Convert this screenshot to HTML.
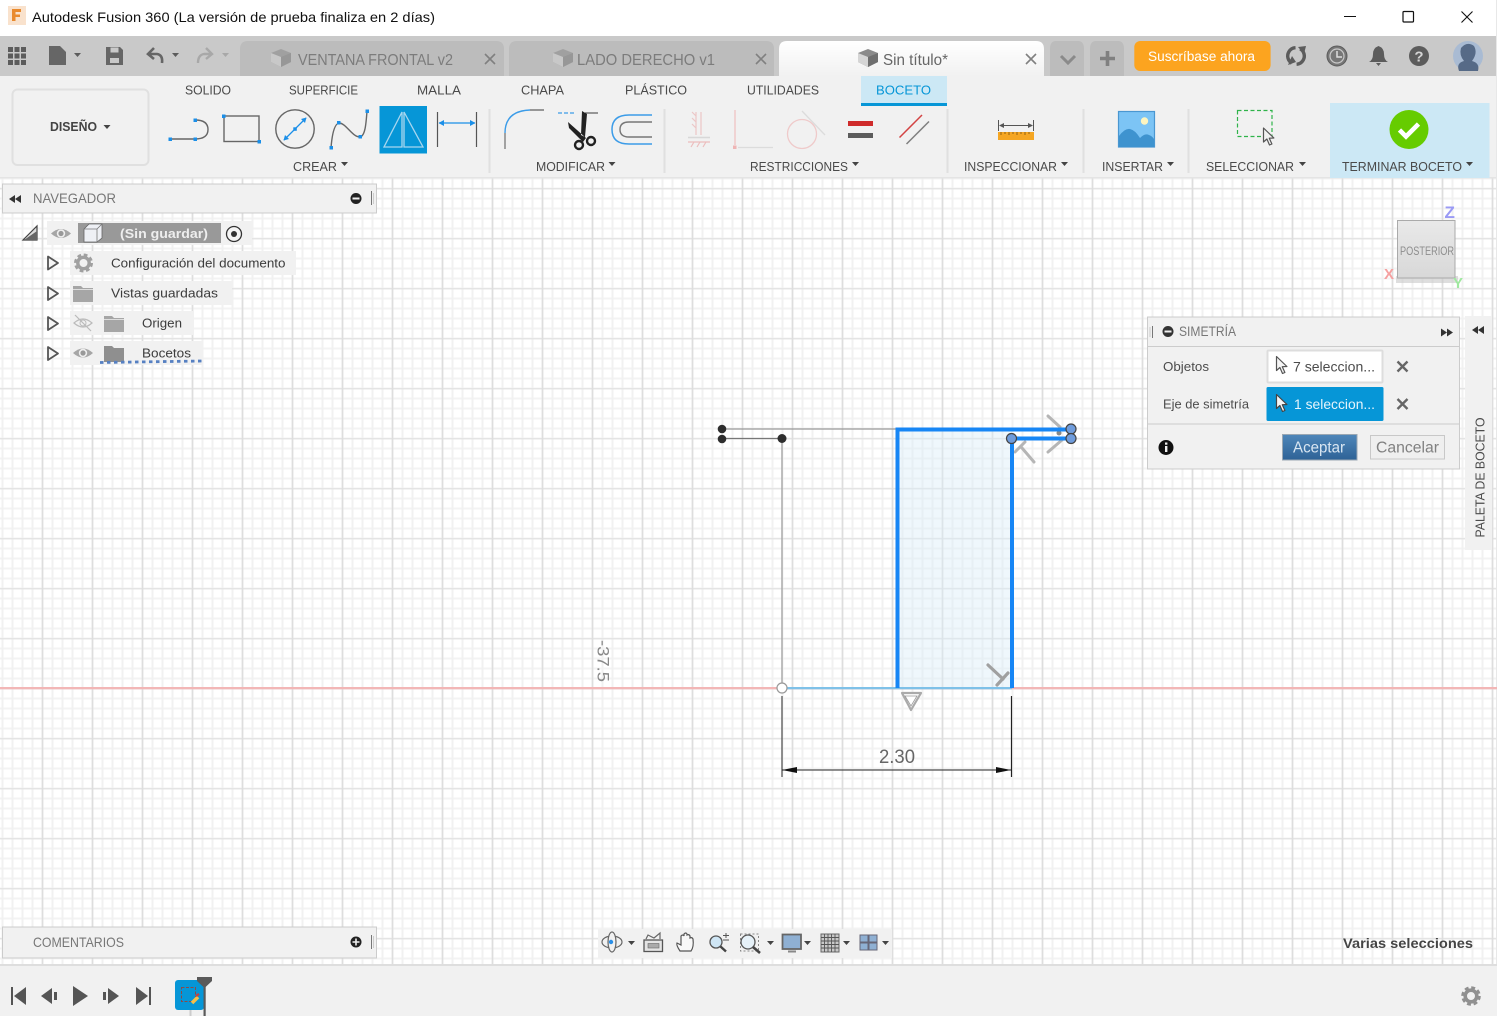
<!DOCTYPE html>
<html><head><meta charset="utf-8"><title>Autodesk Fusion 360</title>
<style>
html,body{margin:0;padding:0;width:1497px;height:1016px;overflow:hidden;background:#fff}
svg{position:absolute;left:0;top:0;display:block;filter:blur(0.35px)}
text{font-family:"Liberation Sans",sans-serif}
.rb{font-size:13px;fill:#4a4a4a}
.lb{font-size:13px;fill:#4a4a4a}
.tr{font-size:12.5px;fill:#3c3c3c}
.gr{stroke:#666;fill:none;stroke-width:1.4}
.bl{fill:#0696d7}
</style></head><body>
<svg width="1497" height="1016" viewBox="0 0 1497 1016" xmlns="http://www.w3.org/2000/svg">
<defs>
<pattern id="gmv" width="10" height="10" patternUnits="userSpaceOnUse" patternTransform="translate(1.5 0)"><rect width="2" height="10" fill="#f1f1f1"/></pattern>
<pattern id="gmh" width="10" height="10" patternUnits="userSpaceOnUse" patternTransform="translate(0 7.5)"><rect width="10" height="2" fill="#f3f3f3"/></pattern>
<pattern id="gMv" width="50" height="50" patternUnits="userSpaceOnUse" patternTransform="translate(41.7 0)"><rect width="1.6" height="50" fill="#dedede"/></pattern>
<pattern id="gMh" width="50" height="50" patternUnits="userSpaceOnUse" patternTransform="translate(0 38)"><rect width="50" height="1.4" fill="#e4e4e4"/></pattern>
<linearGradient id="acc" x1="0" y1="0" x2="0" y2="1"><stop offset="0" stop-color="#4f87ba"/><stop offset="1" stop-color="#2e6296"/></linearGradient>
<linearGradient id="tabw" x1="0" y1="0" x2="0" y2="1"><stop offset="0" stop-color="#fff"/><stop offset="1" stop-color="#f1f1f1"/></linearGradient>
<linearGradient id="vc" x1="0" y1="0" x2="0" y2="1"><stop offset="0" stop-color="#e9e9e9"/><stop offset="1" stop-color="#d8d8d8"/></linearGradient>
<g id="cube"><path d="M0 4 L10 0 L20 4 L20 13 L10 18 L0 13Z" fill="#8a8a8a"/><path d="M0 4 L10 8 L10 18 L0 13Z" fill="#d5d5d5"/><path d="M10 8 L20 4 L20 13 L10 18Z" fill="#6f6f6f"/></g>
<g id="cubel"><path d="M0 4 L10 0 L20 4 L20 13 L10 18 L0 13Z" fill="#a0a0a0"/><path d="M0 4 L10 8 L10 18 L0 13Z" fill="#c8c8c8"/><path d="M10 8 L20 4 L20 13 L10 18Z" fill="#979797"/></g>
<g id="car"><path d="M0 0 H7 L3.5 4Z"/></g>
<g id="folder"><path d="M0 1 H8 L10 3 H20 V17 H0Z" fill="#a6a6a6"/><path d="M0 4.500 H20" stroke="#f1f1f1" stroke-width="0.800"/></g>
<g id="eye"><path d="M-10 0 Q0 -9 10 0 Q0 9 -10 0Z" fill="#a6a6a6"/><circle r="4.200" fill="#eee"/><circle r="2.600" fill="#999"/></g>
<g id="tri"><path d="M-5 -6.5 L5 0 L-5 6.5Z" fill="#f5f5f5" stroke="#555" stroke-width="1.800" stroke-linejoin="round"/></g>
<g id="cur"><path d="M0 0 L0 14 L3.4 11 L6 17 L8.4 16 L5.8 10.2 L10.4 10 Z" stroke-width="1.2" stroke-linejoin="round"/></g>
</defs>

<!-- canvas -->
<rect x="0" y="178" width="1497" height="786" fill="#fff"/>
<rect x="0" y="178" width="1497" height="786" fill="url(#gmh)"/>
<rect x="0" y="178" width="1497" height="786" fill="url(#gmv)"/>
<rect x="0" y="178" width="1497" height="786" fill="url(#gMh)"/>
<rect x="0" y="178" width="1497" height="786" fill="url(#gMv)"/>

<!-- title bar -->
<rect x="0" y="0" width="1497" height="36" fill="#fff"/>
<rect x="8" y="6" width="18" height="19" fill="#f9e2cd"/>
<path d="M12 9 H21 V12 H15.5 V14.5 H20 V17 H15.5 V21 H12Z" fill="#e98a2d"/>
<text x="32" y="22" font-size="14" fill="#111" textLength="403" lengthAdjust="spacingAndGlyphs">Autodesk Fusion 360 (La versión de prueba finaliza en 2 días)</text>
<path d="M1344 16.5 H1356" stroke="#111" stroke-width="1"/>
<rect x="1403" y="11.5" width="10.5" height="10.5" rx="1" fill="none" stroke="#111" stroke-width="1.2"/>
<path d="M1461.5 11.5 L1472.5 22.5 M1472.5 11.5 L1461.5 22.5" stroke="#111" stroke-width="1.1"/>

<!-- tab bar -->
<rect x="0" y="36" width="1496" height="40" fill="#c9c9c9"/>
<g fill="#5c5c5c">
<rect x="8" y="47" width="5" height="5"/><rect x="14.5" y="47" width="5" height="5"/><rect x="21" y="47" width="5" height="5"/>
<rect x="8" y="53.5" width="5" height="5"/><rect x="14.5" y="53.5" width="5" height="5"/><rect x="21" y="53.5" width="5" height="5"/>
<rect x="8" y="60" width="5" height="5"/><rect x="14.5" y="60" width="5" height="5"/><rect x="21" y="60" width="5" height="5"/>
<path d="M49 46 H60 L66 52 V65 H49Z" fill="#666"/>
<use href="#car" x="74" y="53"/>
<path d="M106 47 H120 L123 50 V65 H106Z" fill="#666"/>
<use href="#car" x="172" y="53"/>
</g>
<rect x="110.500" y="47.500" width="8" height="5" fill="#c9c9c9"/><rect x="110" y="58" width="9" height="5" fill="#c9c9c9"/>
<path d="M154 48 L148 54 L154 59 M148 54 H157 Q163 55 162 63" fill="none" stroke="#666" stroke-width="2.600"/>
<path d="M206 48 L212 54 L206 59 M212 54 H204 Q198 55 198 63" fill="none" stroke="#a8a8a8" stroke-width="2.400"/>
<use href="#car" x="222" y="53" fill="#a8a8a8"/>

<path d="M240 76 V49 Q240 41 248 41 H496 Q504 41 504 49 V76Z" fill="#bcbcbc"/>
<path d="M509 76 V49 Q509 41 517 41 H766 Q774 41 774 49 V76Z" fill="#bcbcbc"/>
<path d="M779 76 V49 Q779 41 787 41 H1036 Q1044 41 1044 49 V76Z" fill="url(#tabw)"/>
<path d="M1050 76 V49 Q1050 41 1056 41 H1078 Q1084 41 1084 49 V76Z" fill="#bcbcbc"/>
<path d="M1090 76 V49 Q1090 41 1096 41 H1118 Q1124 41 1124 49 V76Z" fill="#bcbcbc"/>
<use href="#cubel" x="271" y="49"/><use href="#cubel" x="553" y="49"/><use href="#cube" x="858" y="49"/>
<text x="298" y="65" font-size="16" fill="#7c7c7c" textLength="155" lengthAdjust="spacingAndGlyphs">VENTANA FRONTAL v2</text>
<text x="577" y="65" font-size="16" fill="#7c7c7c" textLength="138" lengthAdjust="spacingAndGlyphs">LADO DERECHO v1</text>
<text x="883" y="65" font-size="16" fill="#666" textLength="65" lengthAdjust="spacingAndGlyphs">Sin título*</text>
<path d="M485 54 L495 64 M495 54 L485 64 M756 54 L766 64 M766 54 L756 64" stroke="#808080" stroke-width="1.600"/>
<path d="M1026 54 L1036 64 M1036 54 L1026 64" stroke="#808080" stroke-width="1.600"/>
<path d="M1061 56 L1068 63 L1075 56" fill="none" stroke="#8a8a8a" stroke-width="3"/>
<path d="M1107.500 51 V66 M1100 58.500 H1115" stroke="#808080" stroke-width="3.600"/>
<rect x="1134.300" y="41" width="136.300" height="30" rx="6" fill="#fca41f"/>
<text x="1148" y="61" font-size="13.500" fill="#fff" textLength="107" lengthAdjust="spacingAndGlyphs">Suscríbase ahora</text>
<circle cx="1296" cy="56" r="8.300" fill="none" stroke="#5c5c5c" stroke-width="3.400" stroke-dasharray="21 5 21 5"  transform="rotate(-60 1296 56)"/>
<path d="M1298 47 L1306 46 L1304 54 Z M1292 56 L1288 65 L1296 62Z" fill="#5c5c5c"/>
<circle cx="1337" cy="56" r="10" fill="#777" stroke="#5c5c5c" stroke-width="1"/><circle cx="1337" cy="56" r="7" fill="#777" stroke="#c9c9c9" stroke-width="1.200"/>
<path d="M1337 51 V57 H1342" fill="none" stroke="#ddd" stroke-width="1.500"/>
<path d="M1378.500 46 Q1373 48 1373 54 Q1373 60 1369 62 H1388 Q1384 60 1384 54 Q1384 48 1378.500 46Z M1376 63 H1381 L1378.500 66Z" fill="#5c5c5c"/>
<circle cx="1419" cy="56" r="10" fill="#5c5c5c"/>
<text x="1419" y="61.500" font-size="15" font-weight="bold" fill="#d5d5d5" text-anchor="middle">?</text>
<circle cx="1468" cy="56" r="15" fill="#a9bbd3"/>
<path d="M1459 71 Q1456 63 1464 61 Q1459 55 1461 48 Q1467 41 1474 46 Q1478 53 1472 61 Q1480 63 1478 71 Z" fill="#566a87"/>
<rect x="1496" y="0" width="1" height="1016" fill="#e8e8e8"/>

<!-- ribbon -->
<rect x="0" y="76" width="1496" height="102" fill="#f1f1f1"/>
<rect x="0" y="177" width="1496" height="1.500" fill="#e4e4e4"/>
<rect x="861" y="76" width="86" height="27" fill="#cce8f5"/>
<rect x="861" y="103" width="86" height="3" fill="#0696d7"/>
<g class="rb">
<text x="185" y="94.500" class="rb" textLength="46" lengthAdjust="spacingAndGlyphs">SOLIDO</text>
<text x="289" y="94.500" class="rb" textLength="69" lengthAdjust="spacingAndGlyphs">SUPERFICIE</text>
<text x="417" y="94.500" class="rb" textLength="44" lengthAdjust="spacingAndGlyphs">MALLA</text>
<text x="521" y="94.500" class="rb" textLength="43" lengthAdjust="spacingAndGlyphs">CHAPA</text>
<text x="625" y="94.500" class="rb" textLength="62" lengthAdjust="spacingAndGlyphs">PLÁSTICO</text>
<text x="747" y="94.500" class="rb" textLength="72" lengthAdjust="spacingAndGlyphs">UTILIDADES</text>
<text x="876" y="94.500" font-size="13" fill="#0696d7" textLength="55" lengthAdjust="spacingAndGlyphs">BOCETO</text>
</g>
<rect x="12.500" y="89.500" width="136" height="75.500" rx="5" fill="#f1f1f1" stroke="#e0e0e0" stroke-width="2"/>
<text x="50" y="131" font-size="13" font-weight="bold" fill="#444" textLength="47" lengthAdjust="spacingAndGlyphs">DISEÑO</text>
<use href="#car" x="103.500" y="125" fill="#444"/>

<!-- separators -->
<g fill="#e0e0e0"><rect x="488.500" y="109" width="2" height="64"/><rect x="663.500" y="109" width="2" height="64"/><rect x="946.500" y="109" width="2" height="64"/><rect x="1082.500" y="109" width="2" height="64"/><rect x="1187.500" y="109" width="2" height="64"/></g>

<!-- create icons -->
<path d="M170 139 H195 M195 120 Q208 120 208 129.500 Q208 139 195 139" class="gr"/>
<g fill="#1b8fe8"><rect x="168.500" y="137.500" width="3.500" height="3.500"/><rect x="193.500" y="137.500" width="3.500" height="3.500"/><rect x="193.500" y="118.500" width="3.500" height="3.500"/></g>
<rect x="224" y="116" width="35" height="25.500" class="gr"/>
<g fill="#1b8fe8"><rect x="222" y="114.500" width="3.500" height="3.500"/><rect x="257.500" y="140" width="3.500" height="3.500"/></g>
<circle cx="295" cy="129" r="19.200" class="gr"/>
<path d="M284 140 L306 118" stroke="#1b8fe8" stroke-width="1.300"/>
<path d="M306.500 117.500 L305 123 L301 119Z M283.500 140.500 L285 135 L289 139Z" fill="#1b8fe8"/>
<rect x="293.300" y="127.300" width="3.500" height="3.500" fill="#1b8fe8"/>
<path d="M331 148 C332 135 334 124 339 123 C346 123 352 137 360 137 C365 136 366 125 367 111" class="gr" stroke-width="1.200"/>
<g fill="#1b8fe8"><rect x="329.500" y="146" width="3.500" height="3.500"/><rect x="337" y="121" width="3.500" height="3.500"/><rect x="358.500" y="135" width="3.500" height="3.500"/><rect x="365.500" y="109.500" width="3.500" height="3.500"/></g>
<rect x="379.500" y="106" width="47.500" height="47.500" class="bl"/>
<path d="M402 112 L384 147 H402Z M404 112 L423 147 H404Z" fill="none" stroke="#a8d6ef" stroke-width="1.300"/>
<path d="M437.500 112 V147 M476.500 112 V147" stroke="#555" stroke-width="1.200"/>
<path d="M439 123 H475" stroke="#1b8fe8" stroke-width="1.200"/><path d="M438.500 123 L444 120 V126Z M475.500 123 L470 120 V126Z" fill="#1b8fe8"/>
<text x="293" y="171" class="lb" textLength="44" lengthAdjust="spacingAndGlyphs">CREAR</text><use href="#car" x="341" y="162" fill="#444"/>

<!-- modify icons -->
<path d="M530 110 H544" stroke="#666" stroke-width="1.300"/>
<path d="M530 110 Q505 111 505 133" fill="none" stroke="#3c9ce8" stroke-width="1.400"/>
<path d="M505 133 V149" stroke="#777" stroke-width="1.300"/>
<path d="M558 113 H575" stroke="#3c9ce8" stroke-width="1.300" stroke-dasharray="4 2"/><path d="M585 113 H598" stroke="#666" stroke-width="1.300"/>
<path d="M568 122 L586 138 L583 142 L569 128Z M582 111 L581 135 L585 137 L587 114Z" fill="#222"/>
<circle cx="579" cy="145" r="4" fill="none" stroke="#222" stroke-width="2.400"/><circle cx="591" cy="141" r="4" fill="none" stroke="#222" stroke-width="2.400"/>
<path d="M652 115 H629 Q612 115 612 129.500 Q612 144 629 144 H652" fill="none" stroke="#3c9ce8" stroke-width="1.500"/>
<path d="M652 122 H629 Q620 122 620 129.500 Q620 137 629 137 H652" fill="none" stroke="#777" stroke-width="1.400"/>
<text x="536" y="171" class="lb" textLength="69" lengthAdjust="spacingAndGlyphs">MODIFICAR</text><use href="#car" x="608.500" y="162" fill="#444"/>

<!-- constraints -->
<path d="M696 112 V135 M701 112 V135 M692 112 L696 116 M692 118 L696 122 M692 124 L696 128" stroke="#ecc6c6" stroke-width="1.200" fill="none"/>
<path d="M688 137.500 H710" stroke="#d8d8d8" stroke-width="1.500"/><path d="M688 142 H710 M691 147 L694 142 M697 147 L700 142 M703 147 L706 142" stroke="#ecbdbd" stroke-width="1.200"/>
<path d="M735 110 V145" stroke="#efc3c3" stroke-width="1.300"/><rect x="733" y="145.500" width="3.500" height="3.500" fill="#efb5b5"/>
<path d="M738 147.500 H773" stroke="#dcdcdc" stroke-width="1.300"/>
<circle cx="802" cy="134" r="14.500" fill="none" stroke="#efcaca" stroke-width="1.300"/>
<path d="M802 111 L825 135" stroke="#dcdcdc" stroke-width="1.300"/>
<rect x="848" y="121" width="25" height="5" fill="#cf2b2b"/><rect x="848" y="133" width="25" height="5" fill="#5c5c5c"/>
<path d="M899.500 137.500 L922 115" stroke="#d34343" stroke-width="1.500"/><path d="M906.500 144 L929 121.500" stroke="#808080" stroke-width="1.500"/>
<text x="750" y="171" class="lb" textLength="98" lengthAdjust="spacingAndGlyphs">RESTRICCIONES</text><use href="#car" x="852" y="162" fill="#444"/>

<!-- inspect -->
<path d="M998.500 120 V131 M1033.500 120 V131" stroke="#555" stroke-width="1"/>
<path d="M1000 125.500 H1032" stroke="#555" stroke-width="1"/><path d="M999 125.500 L1004 123 V128Z M1033 125.500 L1028 123 V128Z" fill="#555"/>
<rect x="998" y="132" width="36" height="8" fill="#f5a623"/>
<path d="M1001 132 V135 M1005 132 V134 M1009 132 V135 M1013 132 V134 M1017 132 V135 M1021 132 V134 M1025 132 V135 M1029 132 V134" stroke="#8a5c10" stroke-width="0.900"/>
<text x="964" y="171" class="lb" textLength="93" lengthAdjust="spacingAndGlyphs">INSPECCIONAR</text><use href="#car" x="1061" y="162" fill="#444"/>

<!-- insert -->
<rect x="1118" y="111" width="37" height="36.500" fill="#7cc4f5"/>
<rect x="1118.500" y="111.500" width="36" height="35.500" fill="none" stroke="#4a97d1" stroke-width="1.200"/>
<circle cx="1144.500" cy="121" r="3.700" fill="#fdf5c0"/>
<path d="M1119 147 V136 Q1125 128 1130 129 Q1135 130 1140 138 Q1145 133 1149 135 Q1152 136 1154 139 V147Z" fill="#3e93cf"/>
<text x="1102" y="171" class="lb" textLength="61" lengthAdjust="spacingAndGlyphs">INSERTAR</text><use href="#car" x="1167" y="162" fill="#444"/>

<!-- select -->
<rect x="1237.500" y="110.500" width="34.500" height="26" fill="none" stroke="#2fb34a" stroke-width="1.200" stroke-dasharray="4 2.500"/>
<use href="#cur" x="1263.500" y="128" fill="#f1f1f1" stroke="#555"/>
<text x="1206" y="171" class="lb" textLength="88" lengthAdjust="spacingAndGlyphs">SELECCIONAR</text><use href="#car" x="1299" y="162" fill="#444"/>

<!-- finish -->
<rect x="1330" y="103" width="159.500" height="75" fill="#cce8f5"/>
<circle cx="1409" cy="129.500" r="19.500" fill="#66cc00"/>
<path d="M1399.500 130 L1406 136.500 L1418.500 124" fill="none" stroke="#fff" stroke-width="4.600"/>
<text x="1342" y="171" class="lb" textLength="120" lengthAdjust="spacingAndGlyphs">TERMINAR BOCETO</text><use href="#car" x="1466" y="162" fill="#444"/>

<!-- navigator -->
<rect x="2.500" y="184" width="374" height="29" fill="#f1f1f1" stroke="#ccc" stroke-width="1"/>
<path d="M9 199 L15 195 V203Z M15 199 L21 195 V203Z" fill="#333"/>
<text x="33" y="203" font-size="14" fill="#777" textLength="83" lengthAdjust="spacingAndGlyphs">NAVEGADOR</text>
<circle cx="356" cy="198.500" r="5.500" fill="#222"/><rect x="352.500" y="197.500" width="7" height="2" fill="#f1f1f1"/>
<path d="M371.500 191 V205" stroke="#777" stroke-width="1"/><path d="M373.500 193 V204" stroke="#ccc" stroke-width="1"/>

<rect x="47" y="221" width="205" height="24" fill="#f1f1f1"/>
<path d="M23 240 L37 226 V240Z" fill="#ddd" stroke="#444" stroke-width="1.200"/>
<path d="M24 240 L37 240 V231Z" fill="#666"/>
<use href="#eye" x="61" y="233.500"/>
<rect x="78" y="223" width="143" height="20" fill="#999"/>
<path d="M84 229 L89 224 H102 V238 L97 242 H84Z" fill="#eef0f5" stroke="#666" stroke-width="0.800"/><path d="M84 229 H97 V242 M97 229 L102 224" fill="none" stroke="#777" stroke-width="0.800"/>
<text x="120" y="238" font-size="13" font-weight="bold" fill="#eee" textLength="88" lengthAdjust="spacingAndGlyphs">(Sin guardar)</text>
<circle cx="234" cy="234" r="7.500" fill="#f5f5f5" stroke="#333" stroke-width="1.300"/><circle cx="234" cy="234" r="3" fill="#333"/>

<rect x="70" y="251" width="226" height="24" fill="#f1f1f1"/>
<use href="#tri" x="53" y="263"/>
<g transform="translate(83.500 263)"><circle r="7.800" fill="none" stroke="#a0a0a0" stroke-width="3.400" stroke-dasharray="3.600 2.520"/><circle r="5.700" fill="none" stroke="#a0a0a0" stroke-width="3.400"/></g>
<text x="111" y="267.500" class="tr" textLength="174.500" lengthAdjust="spacingAndGlyphs">Configuración del documento</text>

<rect x="70" y="281" width="162" height="24" fill="#f1f1f1"/>
<use href="#tri" x="53" y="293.500"/>
<use href="#folder" x="73" y="285"/>
<text x="111" y="297.500" class="tr" textLength="107" lengthAdjust="spacingAndGlyphs">Vistas guardadas</text>

<rect x="70" y="311" width="124" height="24" fill="#f1f1f1"/>
<use href="#tri" x="53" y="323.500"/>
<path d="M74 323 Q83 315 92 323 Q83 331 74 323Z" fill="none" stroke="#bbb" stroke-width="1.200"/><circle cx="83" cy="323" r="3" fill="none" stroke="#bbb"/>
<path d="M75 315 L91 331" stroke="#bbb" stroke-width="1.200"/>
<use href="#folder" x="104" y="315"/>
<text x="142" y="327.500" class="tr" textLength="40" lengthAdjust="spacingAndGlyphs">Origen</text>

<rect x="70" y="341" width="133" height="24" fill="#f1f1f1"/>
<use href="#tri" x="53" y="353.500"/>
<use href="#eye" x="83" y="353"/>
<g transform="translate(104 345)"><path d="M0 1 H8 L10 3 H20 V17 H0Z" fill="#8f8f8f"/></g>
<text x="142" y="357.500" class="tr" textLength="49" lengthAdjust="spacingAndGlyphs">Bocetos</text>
<path d="M100 362.500 L203 361" stroke="#5680c2" stroke-width="2.800" stroke-dasharray="3.500 3.500"/>

<!-- viewcube -->
<rect x="1396" y="276" width="62" height="7" fill="#c8c8c8" opacity="0.600"/>
<rect x="1397.500" y="220.500" width="57.500" height="57.500" fill="url(#vc)" stroke="#aaa" stroke-width="1"/>
<text x="1400" y="255" font-size="11.500" fill="#8d8d8d" textLength="54" lengthAdjust="spacingAndGlyphs">POSTERIOR</text>
<text x="1444.500" y="218" font-size="17" font-weight="bold" fill="#9a9af5">Z</text>
<text x="1384" y="279" font-size="15" font-weight="bold" fill="#f5a0a0">X</text>
<text x="1453" y="288" font-size="15" font-weight="bold" fill="#9fe89f">Y</text>

<!-- sketch -->
<rect x="0" y="687" width="1497" height="2.300" fill="#f2b6b6"/>
<rect x="897" y="429" width="115" height="259" fill="#d8ebf9" opacity="0.420"/>
<rect x="782" y="687" width="230" height="2.300" fill="#7fc1e8"/>
<path d="M722 429 H897" stroke="#999" stroke-width="1.300"/>
<path d="M722 438.500 H782" stroke="#777" stroke-width="1.300"/>
<path d="M782 438 V683" stroke="#aaa" stroke-width="1.500"/>
<path d="M1048 416 L1060 427 M1048 452 L1062 440" stroke="#b5b5b5" stroke-width="3" stroke-linecap="round"/>
<circle cx="1059" cy="433" r="2.500" fill="#888"/>
<path d="M1034 462 L1022 448 M1015 452 L1025 442" stroke="#b5b5b5" stroke-width="3" stroke-linecap="round"/>
<path d="M988 665 L1003 679 M997 685 L1008 673" stroke="#a0a0a0" stroke-width="3.200" stroke-linecap="round"/>
<path d="M897.500 688 V429.500 H1071" fill="none" stroke="#1786f5" stroke-width="4"/>
<path d="M1012 688 V438.500 H1071" fill="none" stroke="#1786f5" stroke-width="4"/>
<g fill="#2e2e2e"><circle cx="722" cy="429" r="4.300"/><circle cx="722" cy="439" r="4.300"/><circle cx="782" cy="438.500" r="4.500"/></g>
<g fill="#6f9cdc" stroke="#444" stroke-width="1.200"><circle cx="1011.500" cy="438.500" r="5"/><circle cx="1071" cy="429" r="5"/><circle cx="1071" cy="438.500" r="5"/></g>
<circle cx="782" cy="688" r="5" fill="#fff" stroke="#999" stroke-width="1.200"/>
<path d="M902 693 H921 L911 710Z" fill="#fff" stroke="#aaa" stroke-width="2.200" stroke-linejoin="round"/>
<path d="M905 696 H917 L911 706Z" fill="none" stroke="#999" stroke-width="0.800"/>
<path d="M782 696 V777" stroke="#555" stroke-width="1.300"/><path d="M1011.500 696 V777" stroke="#222" stroke-width="1.200"/>
<path d="M782 770 H1011" stroke="#222" stroke-width="1.100"/>
<path d="M782 770 L797 767 V773Z M1011 770 L996 767 V773Z" fill="#111"/>
<text x="879" y="763" font-size="19" fill="#666" textLength="36" lengthAdjust="spacingAndGlyphs">2.30</text>
<text transform="translate(597.500 640) rotate(90)" font-size="17" fill="#888" textLength="42" lengthAdjust="spacingAndGlyphs">-37.5</text>

<!-- simetria -->
<rect x="1147.500" y="317" width="312" height="152" fill="#f1f1f1" stroke="#ccc" stroke-width="1"/>
<path d="M1148 346.500 H1459 M1148 424 H1459" stroke="#ccc" stroke-width="1"/>
<path d="M1150 327 V337" stroke="#ccc" stroke-width="1"/><path d="M1152.500 326 V338" stroke="#777" stroke-width="1"/>
<circle cx="1168" cy="331.500" r="5.500" fill="#333"/><rect x="1164.500" y="330.500" width="7" height="2" fill="#f1f1f1"/>
<text x="1179" y="336" font-size="14" fill="#777" textLength="57" lengthAdjust="spacingAndGlyphs">SIMETRÍA</text>
<path d="M1441 328.500 L1447 332.500 L1441 336.500Z M1447 328.500 L1453 332.500 L1447 336.500Z" fill="#333"/>
<text x="1163" y="371" font-size="13" fill="#4c4c4c" textLength="46" lengthAdjust="spacingAndGlyphs">Objetos</text>
<text x="1163" y="408.500" font-size="13" fill="#4c4c4c" textLength="86" lengthAdjust="spacingAndGlyphs">Eje de simetría</text>
<rect x="1267.500" y="350.500" width="115" height="32" rx="1" fill="#fff" stroke="#ddd" stroke-width="2"/>
<rect x="1266.500" y="387" width="117" height="34" rx="1.500" fill="#0696d7"/>
<use href="#cur" x="1276.500" y="356.500" fill="#f5f5f5" stroke="#555"/>
<use href="#cur" x="1276.500" y="394.500" fill="#f5f5f5" stroke="#444"/>
<text x="1293" y="371.500" font-size="13.500" fill="#4c4c4c" textLength="82" lengthAdjust="spacingAndGlyphs">7 seleccion...</text>
<text x="1294" y="409" font-size="13.500" fill="#e6f4fb" textLength="81" lengthAdjust="spacingAndGlyphs">1 seleccion...</text>
<path d="M1397.500 361.500 L1407.500 371.500 M1407.500 361.500 L1397.500 371.500 M1397.500 399 L1407.500 409 M1407.500 399 L1397.500 409" stroke="#666" stroke-width="2.400"/>
<circle cx="1166" cy="447.500" r="7.500" fill="#111"/>
<rect x="1165" y="446" width="2.400" height="6" fill="#f1f1f1"/><rect x="1165" y="442.500" width="2.400" height="2.200" fill="#f1f1f1"/>
<rect x="1282.500" y="434.500" width="74.500" height="25.500" fill="url(#acc)" stroke="#9aa7b3" stroke-width="1"/>
<text x="1293" y="452.500" font-size="15.500" fill="#d9e6f2" textLength="52" lengthAdjust="spacingAndGlyphs">Aceptar</text>
<rect x="1370.500" y="435.500" width="74" height="23.500" fill="#efefef" stroke="#c8c8c8" stroke-width="1"/>
<text x="1376" y="452.500" font-size="15.500" fill="#808080" textLength="63" lengthAdjust="spacingAndGlyphs">Cancelar</text>

<!-- palette -->
<rect x="1465" y="316" width="27" height="234" fill="#f1f1f1"/>
<path d="M1472 330 L1478 326 V334Z M1478 330 L1484 326 V334Z" fill="#333"/>
<text transform="translate(1484.500 537.500) rotate(-90)" font-size="12.500" fill="#4c4c4c" textLength="120" lengthAdjust="spacingAndGlyphs">PALETA DE BOCETO</text>

<!-- comentarios -->
<rect x="2.500" y="927" width="374" height="31" fill="#f1f1f1" stroke="#ccc" stroke-width="1"/>
<text x="33" y="947" font-size="14" fill="#777" textLength="91" lengthAdjust="spacingAndGlyphs">COMENTARIOS</text>
<circle cx="356" cy="942" r="5.500" fill="#222"/><path d="M352.500 942 H359.500 M356 938.500 V945.500" stroke="#f1f1f1" stroke-width="1.600"/>
<path d="M371.500 935 V949" stroke="#777" stroke-width="1"/><path d="M373.500 936 V948" stroke="#ccc" stroke-width="1"/>

<!-- nav bar -->
<rect x="598" y="929" width="294" height="29" fill="#f1f1f1"/>
<ellipse cx="612" cy="942" rx="10" ry="6" fill="none" stroke="#666" stroke-width="1.200"/>
<ellipse cx="612" cy="942" rx="4" ry="10" fill="#f1f1f1" stroke="#666" stroke-width="1.200"/>
<circle cx="611" cy="942" r="2.200" fill="#2a8fe8"/>
<use href="#car" x="628" y="941" fill="#444"/>
<rect x="644" y="940" width="18.500" height="11.500" fill="#e4e4e4" stroke="#555" stroke-width="1.300"/>
<rect x="648" y="943.500" width="11" height="4.500" fill="#aaa" stroke="#666" stroke-width="0.600"/>
<path d="M646 939 L648 935 L654 938 L660 933 L660 939" fill="none" stroke="#666" stroke-width="1.200"/>
<path d="M680 951 Q676 945 677 943 L681 945 V936 Q683 934 684 936 V934 Q686 932 687 934 V935 Q689 934 690 936 V938 Q692 937 693 939 Q694 947 691 951Z" fill="#f8f8f8" stroke="#555" stroke-width="1.200"/>
<circle cx="716" cy="942" r="6" fill="#cfe6f5" stroke="#555" stroke-width="1.300"/>
<path d="M720.500 946.500 L726 951.500" stroke="#444" stroke-width="2.400"/>
<path d="M723 935.500 H729 M726 933 V938 M723 940 H729" stroke="#555" stroke-width="1"/>
<rect x="740.500" y="934" width="18" height="17" fill="none" stroke="#888" stroke-width="1" stroke-dasharray="2 2"/>
<circle cx="748" cy="942" r="7" fill="#e6f1f8" stroke="#555" stroke-width="1.300"/>
<path d="M753 947 L760 953" stroke="#444" stroke-width="2.600"/>
<use href="#car" x="767" y="941" fill="#444"/>
<rect x="782.500" y="934.500" width="18.500" height="14.500" fill="#8fb0d3" stroke="#666" stroke-width="1.800"/>
<path d="M788 951.500 H796" stroke="#888" stroke-width="2"/>
<use href="#car" x="804" y="941" fill="#444"/>
<rect x="821" y="934" width="18" height="18" fill="#c8c8c8" stroke="#666" stroke-width="1"/>
<path d="M824.500 934 V952 M828 934 V952 M831.500 934 V952 M835 934 V952 M821 937.500 H839 M821 941 H839 M821 944.500 H839 M821 948 H839" stroke="#555" stroke-width="0.900"/>
<use href="#car" x="843" y="941" fill="#444"/>
<rect x="860" y="935" width="8" height="7" fill="#8fb0d3" stroke="#667" stroke-width="1"/><rect x="869" y="935" width="8" height="7" fill="#8fb0d3" stroke="#667" stroke-width="1"/>
<rect x="860" y="943" width="8" height="7" fill="#8fb0d3" stroke="#667" stroke-width="1"/><rect x="869" y="943" width="8" height="7" fill="#8fb0d3" stroke="#667" stroke-width="1"/>
<use href="#car" x="882" y="941" fill="#444"/>

<text x="1343" y="948" font-size="13.500" font-weight="bold" fill="#444" textLength="130" lengthAdjust="spacingAndGlyphs">Varias selecciones</text>

<!-- bottom bar -->
<rect x="0" y="964" width="1497" height="52" fill="#f1f1f1"/>
<rect x="0" y="964" width="1497" height="2" fill="#dedede"/>
<g fill="#555">
<rect x="11" y="987" width="2" height="18"/><path d="M14 996 L26 987 V1005Z"/>
<path d="M41 996 L52 988 V1004Z"/><rect x="54" y="992" width="3" height="8"/>
<path d="M73 986 L88 996 L73 1006Z"/>
<rect x="103" y="992" width="3" height="8"/><path d="M108 988 L119 996 L108 1004Z"/>
<path d="M148 996 L136 987 V1005Z"/><rect x="149" y="987" width="2" height="18"/>
</g>
<rect x="175" y="980" width="29" height="30" rx="3" fill="#0696d7"/>
<rect x="181.500" y="987.500" width="14" height="14" fill="none" stroke="#8a4a4a" stroke-width="1" stroke-dasharray="3 1.500"/>
<path d="M192 1003 L198 997" stroke="#f5c04a" stroke-width="3.500"/><path d="M196 996 L199 994" stroke="#c94040" stroke-width="2.500"/>
<rect x="189.500" y="1010" width="2" height="6" fill="#ccc"/>
<path d="M197 977 H212 V981 L204.500 988 L197 981Z" fill="#5a5a5a"/>
<rect x="203.500" y="985" width="2.200" height="31" fill="#5a5a5a"/>
<g transform="translate(1471 996)"><circle r="8" fill="none" stroke="#909090" stroke-width="3.600" stroke-dasharray="3.700 2.580"/><circle r="5.800" fill="none" stroke="#909090" stroke-width="3.600"/></g>
</svg>
</body></html>
